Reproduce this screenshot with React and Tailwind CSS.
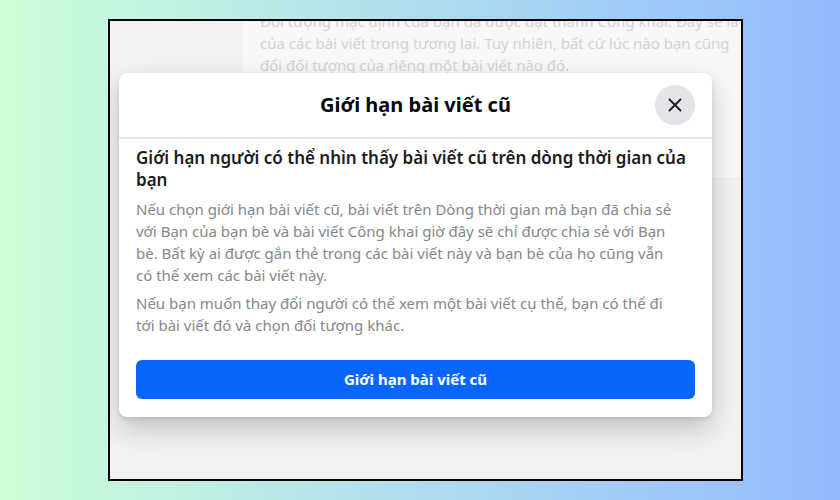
import { X } from 'lucide-react';

const doanVan = [
  [
    'Nếu chọn giới hạn bài viết cũ, bài viết trên Dòng thời gian mà bạn đã chia sẻ',
    'với Bạn của bạn bè và bài viết Công khai giờ đây sẽ chỉ được chia sẻ với Bạn',
    'bè. Bất kỳ ai được gắn thẻ trong các bài viết này và bạn bè của họ cũng vẫn',
    'có thể xem các bài viết này.',
  ],
  [
    'Nếu bạn muốn thay đổi người có thể xem một bài viết cụ thể, bạn có thể đi',
    'tới bài viết đó và chọn đối tượng khác.',
  ],
];

const dongNen = [
  'Đối tượng mặc định của bạn đã được đặt thành Công khai. Đây sẽ là',
  'của các bài viết trong tương lai. Tuy nhiên, bất cứ lúc nào bạn cũng',
  'đổi đối tượng của riêng một bài viết nào đó.',
];

function TrangNen() {
  return (
    <div className="col-start-1 row-start-1 flex items-start overflow-hidden" aria-hidden="true">
      <div className="w-[131px] shrink-0" />
      <div className="h-[158px] min-w-0 flex-1 overflow-hidden border-b border-l border-[#ededed] bg-[#f7f7f7] pl-[18px] text-[15px] leading-[22px] text-[#d4d4d4]">
        <div className="-mt-[11px]">
          {dongNen.map((dong) => (
            <p key={dong} className="whitespace-nowrap">{dong}</p>
          ))}
        </div>
      </div>
    </div>
  );
}

function HopThoai() {
  return (
    <section
      role="dialog"
      aria-labelledby="tieu-de"
      className="z-10 col-start-1 row-start-1 mt-[52px] mr-[29px] mb-[62px] ml-[9px] self-start rounded-lg bg-white shadow-[0_12px_28px_rgba(0,0,0,0.2),0_2px_4px_rgba(0,0,0,0.1)]"
    >
      <header className="grid h-[66px] grid-cols-[40px_1fr_40px] items-center border-b-2 border-[#e5e5e5] px-[17px]">
        <h1 id="tieu-de" className="col-start-2 text-center text-[20px] leading-6 font-bold text-[#080809]">
          Giới hạn bài viết cũ
        </h1>
        <button
          type="button"
          aria-label="Đóng"
          className="flex size-10 items-center justify-center rounded-full bg-[#e3e4ea] text-[#1c1c1d]"
        >
          <X size={22} strokeWidth={2} />
        </button>
      </header>

      <div className="px-[17px] pt-2 pb-[18px]">
        <h2 className="text-[17px] leading-[22px] font-semibold text-[#1c1c1d]">
          Giới hạn người có thể nhìn thấy bài viết cũ trên dòng thời gian của bạn
        </h2>
        <div className="mt-[7px] mb-6 space-y-[6px] text-[15px] leading-[22px] text-[#85878a]">
          {doanVan.map((doan) => (
            <p key={doan[0]}>
              {doan.map((dong) => (
                <span key={dong} className="block">{dong}</span>
              ))}
            </p>
          ))}
        </div>
        <button
          type="button"
          className="h-[39px] w-full rounded-md bg-[#0866ff] text-[15px] font-bold text-white"
        >
          Giới hạn bài viết cũ
        </button>
      </div>
    </section>
  );
}

export default function App() {
  return (
    <main className="flex min-h-screen bg-linear-to-r from-[#cdffd8] to-[#94b9ff] pt-[19px] pr-[97px] pb-[19px] pl-[108px] font-['Noto_Sans','Open_Sans',sans-serif]">
      <div className="grid min-w-0 flex-1 grid-cols-[minmax(0,1fr)] overflow-hidden border-2 border-black bg-[#f2f2f2]">
        <TrangNen />
        <HopThoai />
      </div>
    </main>
  );
}
